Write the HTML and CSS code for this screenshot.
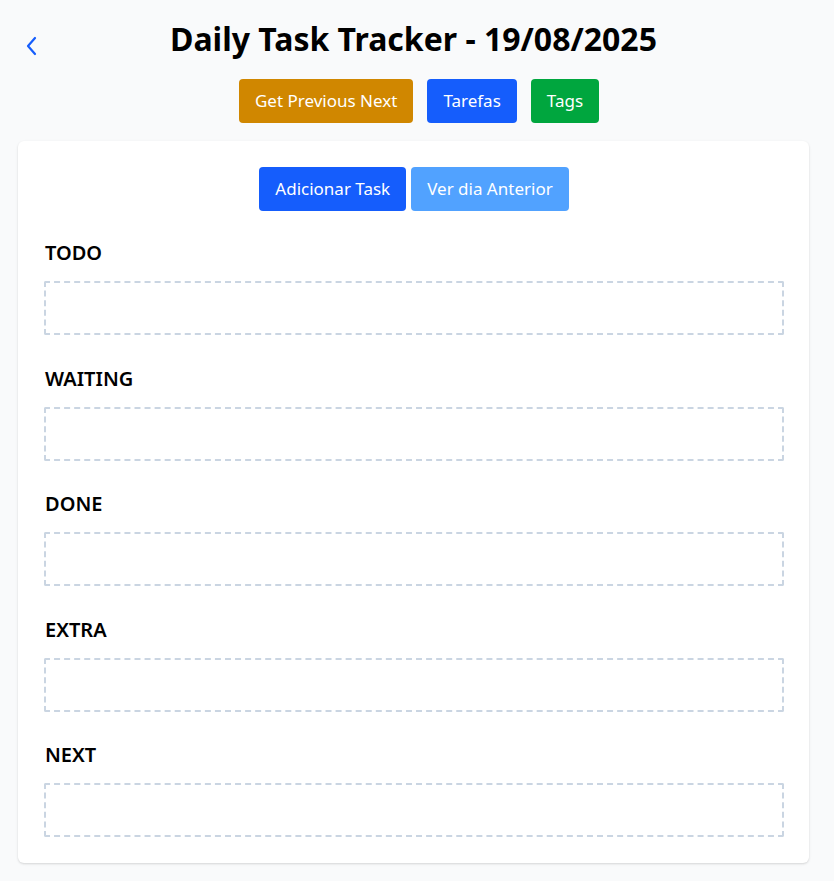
FILE: index.html
```html
<!DOCTYPE html>
<html lang="pt">
<head>
<meta charset="utf-8">
<title>Daily Task Tracker</title>
<link rel="stylesheet" href="styles.css">
</head>
<body>
<div class="page">
  <header class="header">
    <a class="back" href="#" aria-label="Voltar">
      <svg width="14" height="20" viewBox="0 0 14 20" fill="none" stroke="currentColor" stroke-width="2.2" stroke-linecap="round" stroke-linejoin="round"><path d="M10 2 L3 10 L10 18"/></svg>
    </a>
    <h1 class="title">Daily Task Tracker - 19/08/2025</h1>
  </header>
  <nav class="top-actions">
    <button class="btn btn-gold">Get Previous Next</button>
    <button class="btn btn-blue">Tarefas</button>
    <button class="btn btn-green">Tags</button>
  </nav>
  <main class="card">
    <div class="card-actions">
      <button class="btn btn-blue">Adicionar Task</button>
      <button class="btn btn-light">Ver dia Anterior</button>
    </div>
    <section class="section">
      <h2 class="section-title">TODO</h2>
      <div class="dropzone"></div>
    </section>
    <section class="section">
      <h2 class="section-title">WAITING</h2>
      <div class="dropzone"></div>
    </section>
    <section class="section">
      <h2 class="section-title">DONE</h2>
      <div class="dropzone"></div>
    </section>
    <section class="section">
      <h2 class="section-title">EXTRA</h2>
      <div class="dropzone"></div>
    </section>
    <section class="section">
      <h2 class="section-title">NEXT</h2>
      <div class="dropzone"></div>
    </section>
  </main>
</div>
</body>
</html>
```
FILE: styles.css
```css
* { box-sizing: border-box; }
html, body { margin: 0; padding: 0; }
body {
  background: #f9fafb;
  font-family: "Noto Sans", "Open Sans", sans-serif;
  color: #000;
}
.page {
  padding: 18px 25px 18px 18px;
}
.header {
  display: flex;
  align-items: center;
  justify-content: center;
  position: relative;
  height: 42px;
}
.back {
  position: absolute;
  left: 7px;
  top: 18px;
  color: #155dfc;
  display: flex;
}
.title {
  margin: 0;
  font-size: 32px;
  font-weight: 700;
  line-height: 42px;
  text-align: center;
}
.top-actions {
  display: flex;
  justify-content: center;
  gap: 14px;
  margin-top: 19px;
  padding-left: 11px;
}
.btn {
  border: none;
  border-radius: 4px;
  color: #fff;
  font-family: inherit;
  font-size: 17px;
  line-height: 24px;
  padding: 10px 16px;
  cursor: pointer;
}
.btn-gold { background: #d08700; }
.btn-blue { background: #155dfc; }
.btn-green { background: #00a63e; }
.btn-light { background: #51a2ff; }
.card {
  margin-top: 18px;
  background: #fff;
  border-radius: 6px;
  box-shadow: 0 1px 3px rgba(0,0,0,0.1), 0 1px 2px rgba(0,0,0,0.06);
  padding: 26px 25px 26px 26px;
  display: flex;
  flex-direction: column;
  gap: 29.5px;
}
.card-actions {
  display: flex;
  justify-content: center;
  gap: 5px;
  margin-bottom: -1.5px;
}
.section-title {
  margin: 0 0 0 1px;
  font-size: 20px;
  font-weight: 600;
  line-height: 28px;
}
.dropzone {
  margin-top: 14px;
  height: 54px;
  border: 2px dashed #cad5e2;
  border-radius: 2px;
}
```
